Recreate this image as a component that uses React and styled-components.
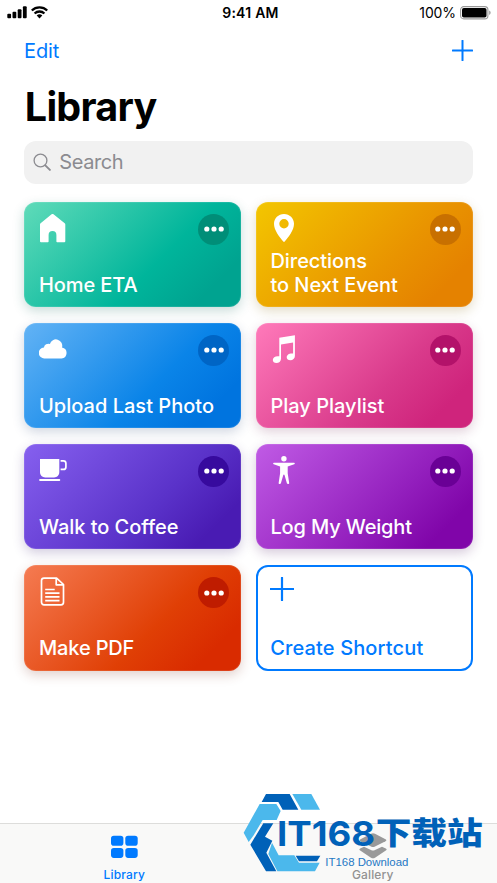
import React from 'react';
import styled, { createGlobalStyle } from 'styled-components';

const GlobalStyle = createGlobalStyle`
  * { box-sizing: border-box; }
  html, body { margin: 0; padding: 0; background: #fff; }
  body { font-family: Inter, "Liberation Sans", sans-serif; overflow: hidden; }
  svg { display: block; flex: none; }
`;

const Screen = styled.main`
  position: relative;
  width: 497px;
  height: 883px;
  display: flex;
  flex-direction: column;
  background: #fff;
  overflow: hidden;
`;

const StatusBar = styled.header`
  display: grid;
  grid-template-columns: 1fr auto 1fr;
  align-items: center;
  height: 25px;
  padding: 0 5px 0 7px;
  color: #000;
`;

const StatusGroup = styled.div`
  display: flex;
  align-items: center;
  justify-content: ${(p) => (p.$end ? 'flex-end' : 'flex-start')};
  gap: 4px;
`;

const Clock = styled.time`
  font-size: 14px;
  font-weight: 600;
  line-height: 25px;
  letter-spacing: 0.25px;
  padding-left: 2px;
`;

const BatteryText = styled.span`
  font-size: 14px;
  line-height: 25px;
  letter-spacing: -0.1px;
`;

const NavBar = styled.nav`
  display: flex;
  align-items: center;
  justify-content: space-between;
  height: 51px;
  padding: 0 24px 0 24px;
`;

const NavButton = styled.button`
  border: 0;
  padding: 0;
  background: none;
  font: 400 20px/24px Inter, sans-serif;
  letter-spacing: -0.1px;
  color: #007aff;
`;

const Title = styled.h1`
  margin: 0;
  height: 64.5px;
  padding: 6.5px 24px 0 24.8px;
  font-size: 39.5px;
  line-height: 48px;
  font-weight: 700;
  letter-spacing: -0.75px;
  color: #000;
`;

const SearchField = styled.div`
  display: flex;
  align-items: center;
  gap: 8px;
  height: 43px;
  margin: 0 24.3px;
  padding: 0 9px 1px;
  border-radius: 12px;
  background: #f1f1f1;
  color: #8b8b90;
  font-size: 20px;
  letter-spacing: -0.4px;
`;

const Grid = styled.section`
  display: grid;
  grid-template-columns: 1fr 1fr;
  grid-auto-rows: 105.5px;
  gap: 15.6px 14.5px;
  padding: 18.3px 24.3px 0;
`;

const Card = styled.article`
  display: flex;
  flex-direction: column;
  justify-content: space-between;
  padding: 12px 12px 10.5px 14.7px;
  border-radius: 12px;
  background: linear-gradient(135deg, ${(p) => p.$from}, ${(p) => p.$mid} 60%, ${(p) => p.$to} 85%);
  box-shadow: 0 4px 12px ${(p) => p.$glow}, inset 0 0 0 1px rgba(255, 255, 255, 0.1);
`;

const OutlineCard = styled(Card)`
  background: #fff;
  border: 2.2px solid #007aff;
  padding: 9.8px 10px 8.5px 12.4px;
  box-shadow: none;
`;

const CardTop = styled.div`
  display: flex;
  justify-content: space-between;
  height: 31px;
`;

const CardLabel = styled.div`
  font-size: 20px;
  line-height: 24px;
  font-weight: 500;
  letter-spacing: ${(p) => p.$tracking || '-0.04px'};
  white-space: pre;
  color: ${(p) => p.$color || '#fff'};
`;

const MoreButton = styled.button`
  display: flex;
  align-items: center;
  justify-content: center;
  width: 31px;
  height: 31px;
  padding: 0;
  border: 0;
  border-radius: 50%;
  background: ${(p) => p.$color};
`;

const Dots = () => (
  <svg width="20" height="6" viewBox="0 0 20 6" fill="#fff">
    <circle cx="2.8" cy="3" r="2.6" />
    <circle cx="10" cy="3" r="2.6" />
    <circle cx="17.2" cy="3" r="2.6" />
  </svg>
);

const TabBar = styled.footer`
  display: grid;
  grid-template-columns: 1fr 1fr;
  height: 60px;
  margin-top: auto;
  border-top: 1px solid #dddddb;
  background: #f9f9f8;
`;

const Tab = styled.div`
  display: flex;
  flex-direction: column;
  align-items: center;
  padding-top: 8px;
  gap: 5px;
  font-size: 12px;
  line-height: 15px;
  font-weight: 500;
  letter-spacing: 0.15px;
  color: ${(p) => p.$color};
`;

const Watermark = styled.svg`
  position: absolute;
  left: 237px;
  top: 780px;
`;

const Signal = () => (
  <svg width="20" height="13" viewBox="0 0 20 13">
    <rect x="0.3" y="7.8" width="3.8" height="4.4" rx="1" />
    <rect x="5.5" y="5.8" width="3.8" height="6.4" rx="1" />
    <rect x="10.7" y="3.2" width="3.8" height="9" rx="1" />
    <rect x="15.9" y="0.3" width="3.8" height="11.9" rx="1" />
  </svg>
);

const Wifi = () => (
  <svg width="17" height="13" viewBox="0 0 17 13" fill="none" stroke="#000" strokeWidth="2.3">
    <path d="M0.8 4.5a11 11 0 0 1 15.4 0" />
    <path d="M3.6 7.5a7 7 0 0 1 9.8 0" />
    <path d="M8.5 12.4 5.7 9.6a4 4 0 0 1 5.6 0z" fill="#000" stroke="none" />
  </svg>
);

const Battery = () => (
  <svg width="32" height="14" viewBox="0 0 32 14">
    <rect x="0.6" y="0.6" width="27.3" height="12.3" rx="3.2" fill="none" stroke="#999" strokeWidth="1.1" />
    <rect x="2" y="2" width="24.5" height="9.5" rx="1.8" />
    <path d="M29.2 4.6a2.4 2.4 0 0 1 0 4.4z" fill="#999" />
  </svg>
);

const Plus = ({ size, box, weight }) => (
  <svg width={box} height={box} viewBox={`0 0 ${box} ${box}`} stroke="#007aff" strokeWidth={weight} strokeLinecap="round">
    <path d={`M${(box - size) / 2} ${box / 2}h${size}M${box / 2} ${(box - size) / 2}v${size}`} />
  </svg>
);

const Magnifier = () => (
  <svg width="18" height="18" viewBox="0 0 18 18" fill="none" stroke="#8b8b90" strokeLinecap="round">
    <circle cx="7.5" cy="7.5" r="6.4" strokeWidth="1.3" />
    <path d="M12.3 12.3l4.6 4.6" strokeWidth="1.9" />
  </svg>
);

const HomeIcon = () => (
  <svg width="30" height="31" viewBox="0 0 30 31" fill="#fff">
    <path d="M12.6.3a1.5 1.5 0 0 1 1.9 0L25.7 9.2a1.6 1.6 0 0 1 .6 1.2V27.3a1 1 0 0 1-1 1H18.2a.8.8 0 0 1-.8-.8V21a3.9 3.9 0 0 0-7.8 0v6.5a.8.8 0 0 1-.8.8H2a1 1 0 0 1-1-1V10.4a1.6 1.6 0 0 1 .6-1.2z" />
  </svg>
);

const PinIcon = () => (
  <svg width="30" height="31" viewBox="0 0 30 31" fill="#fff">
    <path fillRule="evenodd" d="M14 0c5.6 0 10 4.3 10 9.8 0 6.5-5.6 13.3-9.3 17.8-.4.5-1 .5-1.4 0C9.6 23.1 4 16.3 4 9.8 4 4.3 8.4 0 14 0zm0 5.1a4.7 4.7 0 1 0 0 9.4 4.7 4.7 0 0 0 0-9.4z" />
  </svg>
);

const CloudIcon = () => (
  <svg width="30" height="31" viewBox="0 0 30 31" fill="#fff">
    <path d="M5.7 23.4A5.5 5.5 0 0 1 4.9 12.4 4.6 4.6 0 0 1 10.9 8.9 6.3 6.3 0 0 1 23 12.5a5.5 5.5 0 0 1-.5 10.9z" />
  </svg>
);

const MusicIcon = () => (
  <svg width="30" height="31" viewBox="0 0 30 31" fill="#fff">
    <path d="M9.3 2.8 24.9.2V21c0 2.700-2.100 4.200-4.500 4.200-2.200 0-3.700-1.200-3.700-3 0-2.200 2.300-3.800 5-3.800h1.400V7.400L11 9.400V23.800c0 2.600-2.200 4.300-4.600 4.300-2.100 0-3.600-1.200-3.600-3 0-2.200 2.200-3.800 4.900-3.800H9.300z" />
  </svg>
);

const CupIcon = () => (
  <svg width="30" height="31" viewBox="0 0 30 31" fill="#fff">
    <path d="M1 2.9h19.3v13.2c0 3.2-2.200 5.400-5.200 5.400H6.200c-3 0-5.200-2.200-5.200-5.400z" />
    <path d="M21.6 4.800h2.800q2.500 0 2.500 2.500v3.600q0 2.500-2.500 2.500h-2.800" fill="none" stroke="#fff" strokeWidth="1.7" />
    <rect x=".2" y="23" width="21" height="2" rx=".8" />
  </svg>
);

const PersonIcon = () => (
  <svg width="30" height="31" viewBox="0 0 30 31" fill="#fff">
    <circle cx="13.9" cy="2.8" r="2.7" />
    <path d="M3.9 6.700h20.200c.9 0 .9 1.300.1 1.600L17.700 10.600v6.600l1.500 10c.1.900-2.100 1-2.300.1L14.500 19c-.2-.7-1-.7-1.200 0L10.900 27.300c-.2.900-2.400.8-2.300-.1l1.500-10V10.600L3.700 8.300c-.8-.3-.7-1.600.2-1.600z" />
  </svg>
);

const PageIcon = () => (
  <svg width="30" height="31" viewBox="0 0 30 31" fill="none" stroke="#fff" strokeWidth="1.7" strokeLinejoin="round">
    <path d="M5 1.1h12.600L24.500 7.500V25.300a2.500 2.500 0 0 1-2.500 2.500H5a2.500 2.500 0 0 1-2.500-2.500V3.600A2.500 2.500 0 0 1 5 1.100z" />
    <path d="M17.2 1.2V7.800h7.200" />
    <path d="M6.2 12.500h9.500M6.200 16.200h14.300M6.200 19.900h14.300M6.200 23.600h14.300" />
  </svg>
);

const GridIcon = () => (
  <svg width="27" height="30" viewBox="0 0 27 30" fill="#007aff">
    <rect x="0" y="3.7" width="12.4" height="10" rx="2.8" />
    <rect x="14.3" y="3.7" width="12.4" height="10" rx="2.8" />
    <rect x="0" y="15.9" width="12.4" height="10" rx="2.8" />
    <rect x="14.3" y="15.9" width="12.4" height="10" rx="2.8" />
  </svg>
);

const StackIcon = () => (
  <svg width="28" height="30" viewBox="0 0 28 30" fill="#999">
    <path d="M12 1.7q2-1 4 0l10.500 5.500q1.700 1 0 2L16 14.600q-2 1-4 0L1.500 9.200q-1.700-1 0-2z" />
    <path d="M1.2 16.500 5 14.800l7 3.300q2 1 4 0l7-3.300L26.800 16.500q1.700 1 0 2L16 25.700q-2 1-4 0L1.200 18.500q-1.700-1 0-2z" />
  </svg>
);

const shortcuts = [
  { label: 'Home ETA', tracking: '-0.1px', Icon: HomeIcon, from: '#60dbb9', mid: '#00b59b', to: '#00a390', more: '#008e78', glow: 'rgba(30,110,95,.24)' },
  { label: 'Directions\nto Next Event', Icon: PinIcon, from: '#f3c600', mid: '#e99400', to: '#e58200', more: '#c87000', glow: 'rgba(140,110,20,.24)' },
  { label: 'Upload Last Photo', tracking: '0.02px', Icon: CloudIcon, from: '#63b3f5', mid: '#0a84e8', to: '#0074df', more: '#0065c5', glow: 'rgba(40,70,120,.22)' },
  { label: 'Play Playlist', tracking: '0px', Icon: MusicIcon, from: '#ff7aba', mid: '#d93a8b', to: '#cf247c', more: '#b3126a', glow: 'rgba(120,40,85,.22)' },
  { label: 'Walk to Coffee', Icon: CupIcon, from: '#8660ef', mid: '#5a32c9', to: '#491bb3', more: '#370a9e', glow: 'rgba(65,40,120,.24)' },
  { label: 'Log My Weight', tracking: '-0.15px', Icon: PersonIcon, from: '#c05be5', mid: '#931fbd', to: '#8005a9', more: '#6a0096', glow: 'rgba(80,30,100,.24)' },
  { label: 'Make PDF', tracking: '-0.15px', Icon: PageIcon, from: '#f57b52', mid: '#e03f05', to: '#d92b00', more: '#bf1c00', glow: 'rgba(130,60,40,.24)' },
];

const Shortcut = ({ item }) => (
  <Card $from={item.from} $mid={item.mid} $to={item.to} $glow={item.glow}>
    <CardTop>
      <item.Icon />
      <MoreButton $color={item.more} aria-label="More"><Dots /></MoreButton>
    </CardTop>
    <CardLabel $tracking={item.tracking}>{item.label}</CardLabel>
  </Card>
);

const SiteMark = () => (
  <Watermark width="260" height="103" viewBox="0 0 780 309">
    <g fill="#0061b8">
      <path d="M87 42h71l26 47h-47l-13-23H74z" />
      <path d="M79 130h30L84 170l22 12L88 218l30 56H87L40 194z" />
      <path d="M176 227h74l-10 17h-54z" />
    </g>
    <g fill="#4bb8ec">
      <path d="M166 42h57l26 47h-56z" />
      <path d="M68 72h50l13 21-12 27H77L50 166 35 186 20 158z" />
      <path d="M105 188l20 38h47l14 22h62l-14 26H121L94 222z" />
    </g>
    <text x="120" y="198" fill="#0061b8" fontFamily="Inter, sans-serif" fontWeight="700" fontSize="104" textLength="294" lengthAdjust="spacingAndGlyphs">IT168</text>
    <text x="416" y="191" fill="#0061b8" fontFamily='"Noto Sans CJK SC", sans-serif' fontWeight="900" fontSize="92" textLength="321" lengthAdjust="spacingAndGlyphs">下载站</text>
    <text x="265" y="257" fill="#1f78c4" fontFamily='"Liberation Sans", sans-serif' fontSize="33" textLength="249" lengthAdjust="spacingAndGlyphs">IT168 Download</text>
  </Watermark>
);

export default function App() {
  return (
    <>
      <GlobalStyle />
      <Screen>
        <StatusBar>
          <StatusGroup><Signal /><Wifi /></StatusGroup>
          <Clock>9:41 AM</Clock>
          <StatusGroup $end><BatteryText>100%</BatteryText><Battery /></StatusGroup>
        </StatusBar>
        <NavBar>
          <NavButton>Edit</NavButton>
          <NavButton aria-label="Add"><Plus size={19.5} box={21} weight={2} /></NavButton>
        </NavBar>
        <Title>Library</Title>
        <SearchField><Magnifier />Search</SearchField>
        <Grid>
          {shortcuts.map((item) => <Shortcut key={item.label} item={item} />)}
          <OutlineCard>
            <CardTop><Plus size={22.5} box={24} weight={2.2} /></CardTop>
            <CardLabel $color="#007aff" $tracking="0.14px">Create Shortcut</CardLabel>
          </OutlineCard>
        </Grid>
        <TabBar>
          <Tab $color="#007aff"><GridIcon />Library</Tab>
          <Tab $color="#929292"><StackIcon />Gallery</Tab>
        </TabBar>
        <SiteMark />
      </Screen>
    </>
  );
}
